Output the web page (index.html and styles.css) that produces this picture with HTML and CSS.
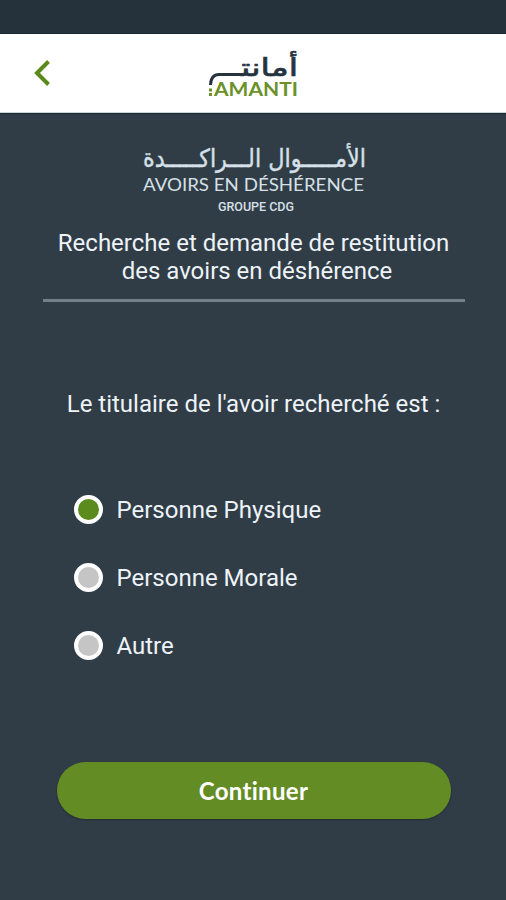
FILE: index.html
```
<!DOCTYPE html>
<html lang="fr">
  <head>
    <meta charset="utf-8" />
    <meta name="viewport" content="width=device-width, initial-scale=1" />
    <title>Amanti</title>
    <link rel="stylesheet" href="styles.css">
  </head>
  <body>
    <div class="status-bar"></div>
    <header class="top-bar">
      <button class="back" type="button" aria-label="Retour">
        <svg width="18" height="28" viewBox="0 0 18 28">
          <path d="M15.500 2.500 4 14l11.500 11.500" />
        </svg>
      </button>
      <svg class="logo" width="94" height="72" viewBox="0 -10 94 72">
        <text class="logo-ar" x="92" y="29" direction="rtl" textLength="57" lengthAdjust="spacingAndGlyphs">أمانت&zwj;</text>
        <path class="swash" d="M37 27.500H13Q5 27.500 4.500 38" />
        <path class="dots" d="M3 41.500h3v3h-3zM3 46h3v3h-3z" />
        <text class="logo-fr" x="8" y="49" textLength="84" lengthAdjust="spacingAndGlyphs">AMANTI</text>
      </svg>
    </header>

    <main>
      <svg class="brand" width="250" height="90" viewBox="-9 -16 250 90">
        <text class="brand-ar" x="228" y="25" direction="rtl" textLength="223" lengthAdjust="spacingAndGlyphs">الأمـــــوال الـــراكـــــدة</text>
        <text class="brand-fr" x="5" y="49" textLength="221" lengthAdjust="spacingAndGlyphs">AVOIRS EN DÉSHÉRENCE</text>
        <text class="brand-group" x="80" y="69" textLength="76" lengthAdjust="spacingAndGlyphs">GROUPE CDG</text>
      </svg>
      <h1>Recherche et demande de restitution <span>des avoirs en déshérence</span></h1>

      <form>
        <p>Le titulaire de l'avoir recherché est :</p>
        <div class="choices">
          <label><input type="radio" name="titulaire" checked />Personne Physique</label>
          <label><input type="radio" name="titulaire" />Personne Morale</label>
          <label><input type="radio" name="titulaire" />Autre</label>
        </div>
        <button class="continue" type="button">Continuer</button>
      </form>
    </main>
  </body>
</html>
```
FILE: styles.css
```
* {
  box-sizing: border-box;
}
body {
  margin: 0;
  height: 900px;
  overflow: hidden;
  background-color: #303d46;
  color: #edf3f8;
  font-family: Roboto, sans-serif;
  font-size: 24px;
}
.status-bar {
  height: 34px;
  background-color: #25323c;
  border-bottom: 1px solid #172630;
}
.top-bar {
  display: grid;
  grid-template-columns: 1fr 94px 1fr;
  align-items: center;
  height: 79px;
  background-color: white;
  border-bottom: 1px solid #ccd4d8;
}
.back {
  justify-self: start;
  margin-left: 33px;
  padding: 0;
  border: none;
  background: none;
  line-height: 0;
  cursor: pointer;
}
.back path {
  fill: none;
  stroke: #5b8a1c;
  stroke-width: 4;
}
.logo-ar {
  font: 25px "DejaVu Sans", sans-serif;
  fill: #26333f;
  stroke: #26333f;
  stroke-width: 0.7;
}
.logo-fr {
  font: bold 19px Lato, sans-serif;
  fill: #6b9128;
}
.swash {
  fill: none;
  stroke: #26333f;
  stroke-width: 3;
}
.dots {
  fill: #6b9128;
}
main {
  display: flex;
  flex-direction: column;
  align-items: center;
  padding: 12px 41px 0 42px;
  border-top: 1px solid #1b2b35;
}
.brand text {
  fill: #d7e0e8;
}
.brand .brand-ar {
  font: 25px "DejaVu Sans", sans-serif;
  stroke: #d7e0e8;
  stroke-width: 0.4;
}
.brand .brand-fr {
  font: 17px Lato, sans-serif;
}
.brand .brand-group {
  font: 500 12px Roboto, sans-serif;
}
h1 {
  width: 422px;
  margin: 13px 0 0;
  padding-bottom: 14px;
  border-bottom: 3px solid #737e88;
  font-size: 24px;
  font-weight: normal;
  line-height: 28px;
  text-align: center;
}
h1 span {
  display: block;
  padding-left: 7px;
}
form {
  display: flex;
  flex-direction: column;
  width: 394px;
}
p {
  margin: 88px 0 0;
  line-height: 28px;
  text-align: center;
}
.choices {
  display: grid;
  gap: 39px;
  margin: 77px 0 0 17px;
}
label {
  display: flex;
  align-items: center;
  gap: 14px;
  line-height: 28px;
}
input {
  appearance: none;
  width: 29px;
  height: 29px;
  margin: 0;
  border: 4px solid white;
  border-radius: 50%;
  background-color: #c5c5c6;
}
input:checked {
  background-color: #5b8b1c;
}
.continue {
  height: 57px;
  margin-top: 102px;
  border: none;
  border-radius: 29px;
  background-color: #648c25;
  box-shadow: 0 1px 2px rgba(0, 0, 0, 0.3);
  color: white;
  font: bold 24px Lato, sans-serif;
  letter-spacing: 0.3px;
  cursor: pointer;
}
```
